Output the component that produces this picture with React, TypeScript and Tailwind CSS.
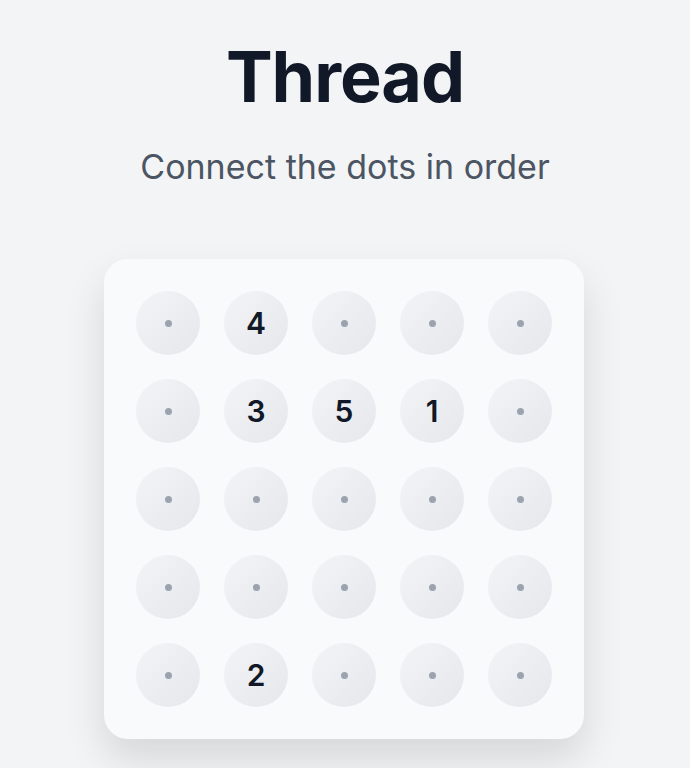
import React from 'react'

const grid: (number | null)[][] = [
  [null, 4, null, null, null],
  [null, 3, 5, 1, null],
  [null, null, null, null, null],
  [null, null, null, null, null],
  [null, 2, null, null, null],
]

function Cell({ value }: { value: number | null }) {
  return (
    <div className="w-16 h-16 rounded-full bg-gradient-to-br from-[#f3f4f6] to-[#e5e7eb] flex items-center justify-center">
      {value === null ? (
        <span className="w-[7px] h-[7px] rounded-full bg-[#9ca3af]" />
      ) : (
        <span className="text-[30px] leading-none font-semibold text-[#111827]">{value}</span>
      )}
    </div>
  )
}

export default function App() {
  return (
    <div className="min-h-screen bg-[#f3f4f6] flex flex-col items-center pt-[42px] font-['Inter',sans-serif]">
      <h1 className="text-[70px] leading-none font-bold text-[#111827] tracking-[-1px]">Thread</h1>
      <p className="mt-[35px] text-[34px] leading-[40px] text-[#4b5563]">Connect the dots in order</p>
      <div className="mt-[72px] ml-[-2px] bg-[#f9fafb] rounded-3xl p-8 shadow-[0_20px_40px_rgba(0,0,0,0.12)]">
        <div className="grid grid-cols-5 gap-6">
          {grid.flat().map((v, i) => (
            <Cell key={i} value={v} />
          ))}
        </div>
      </div>
    </div>
  )
}
